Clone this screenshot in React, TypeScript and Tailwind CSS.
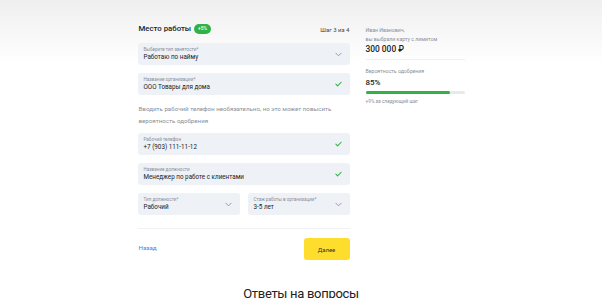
import * as React from "react";

function Chevron() {
  return (
    <svg width="7" height="5" viewBox="0 0 8 5" fill="none" className="shrink-0">
      <path d="M1 1l3 3 3-3" stroke="#8f949c" strokeWidth="1" strokeLinecap="round" strokeLinejoin="round" />
    </svg>
  );
}

function Check() {
  return (
    <svg width="7" height="6" viewBox="0 0 8 6" fill="none" className="shrink-0">
      <path d="M1 3.2l2 2L7 1" stroke="#2fb344" strokeWidth="1.2" strokeLinecap="round" strokeLinejoin="round" />
    </svg>
  );
}

type FieldProps = {
  label: string;
  value: string;
  icon: "chevron" | "check";
  className?: string;
};

function Field({ label, value, icon, className = "" }: FieldProps) {
  return (
    <div className={`flex h-[22px] items-center justify-between rounded-[3px] bg-[#eef1f6] pl-[6px] pr-[8px] ${className}`}>
      <div className="flex flex-col">
        <span className="text-[4.6px] leading-[6px] text-[#8a8f99]">{label}</span>
        <span className="text-[6.3px] leading-[9px] text-[#222]">{value}</span>
      </div>
      {icon === "chevron" ? <Chevron /> : <Check />}
    </div>
  );
}

export default function App() {
  return (
    <div
      className="h-[298px] w-full overflow-hidden bg-[linear-gradient(#efefef,#ffffff_64px)] text-[#222]"
      style={{ fontFamily: "Roboto, 'Noto Sans', sans-serif" }}
    >
      <div className="flex justify-center pt-[23px]">
        <div className="flex w-[327px] gap-[16px]">
          {/* form */}
          <div className="flex w-[212px] flex-col">
            <div className="flex h-[12px] items-center justify-between">
              <div className="flex items-center gap-[3px] pl-[1px]">
                <span className="text-[7.8px] font-medium">Место работы</span>
                <span className="rounded-full bg-[#2fb344] px-[4px] py-[2px] text-[4.8px] leading-[6px] font-medium text-white">+5%</span>
              </div>
              <span className="text-[6px] text-[#444]">Шаг 3 из 4</span>
            </div>

            <div className="mt-[8px] flex flex-col gap-[8px]">
              <Field label="Выберите тип занятости*" value="Работаю по найму" icon="chevron" />
              <Field label="Название организации*" value="ООО Товары для дома" icon="check" />
            </div>

            <p className="mt-[8px] pl-[1px] text-[6.2px] leading-[12px] text-[#8a8f99]">
              Вводить рабочий телефон необязательно, но это может повысить
              <br />
              вероятность одобрения
            </p>

            <div className="mt-[6px] flex flex-col gap-[8px]">
              <Field label="Рабочий телефон" value="+7 (903) 111-11-12" icon="check" />
              <Field label="Название должности" value="Менеджер по работе с клиентами" icon="check" />
              <div className="flex gap-[8px]">
                <Field className="flex-1" label="Тип должности*" value="Рабочий" icon="chevron" />
                <Field className="flex-1" label="Стаж работы в организации*" value="3-5 лет" icon="chevron" />
              </div>
            </div>

            <div className="mt-[13px] h-px bg-[#f0f1f3]" />

            <div className="mt-[9px] flex items-center justify-between">
              <span className="pl-[1px] text-[6.2px] text-[#4a7ae8]">Назад</span>
              <button className="h-[22px] w-[46px] rounded-[3px] bg-[#ffdd2d] text-[6px] text-[#333]">Далее</button>
            </div>
          </div>

          {/* summary */}
          <div className="flex w-[99px] flex-col pt-[3px]">
            <span className="text-[5.2px] leading-[9px] text-[#8a8f99]">Иван Иванович,</span>
            <span className="text-[5.2px] leading-[9px] text-[#8a8f99]">вы выбрали карту с лимитом</span>
            <span className="text-[8.4px] leading-[11px] font-medium">300 000 ₽</span>
            <div className="mt-[4px] h-px bg-[#eeeff1]" />
            <span className="mt-[7px] text-[5.2px] leading-[8px] text-[#8a8f99]">Вероятность одобрения</span>
            <span className="mt-[2px] text-[8px] leading-[11px] font-medium">85%</span>
            <div className="mt-[3px] h-[3px] rounded-full bg-[#e8e9ec]">
              <div className="h-full rounded-full bg-[#2fb344]" style={{ width: "85%" }} />
            </div>
            <span className="mt-[4px] text-[4.8px] leading-[7px] text-[#8a8f99]">+9% за следующий шаг</span>
          </div>
        </div>
      </div>

      <div className="mt-[27px] text-center text-[13px] leading-[14px] tracking-[-0.3px] text-[#222]">Ответы на вопросы</div>
    </div>
  );
}
